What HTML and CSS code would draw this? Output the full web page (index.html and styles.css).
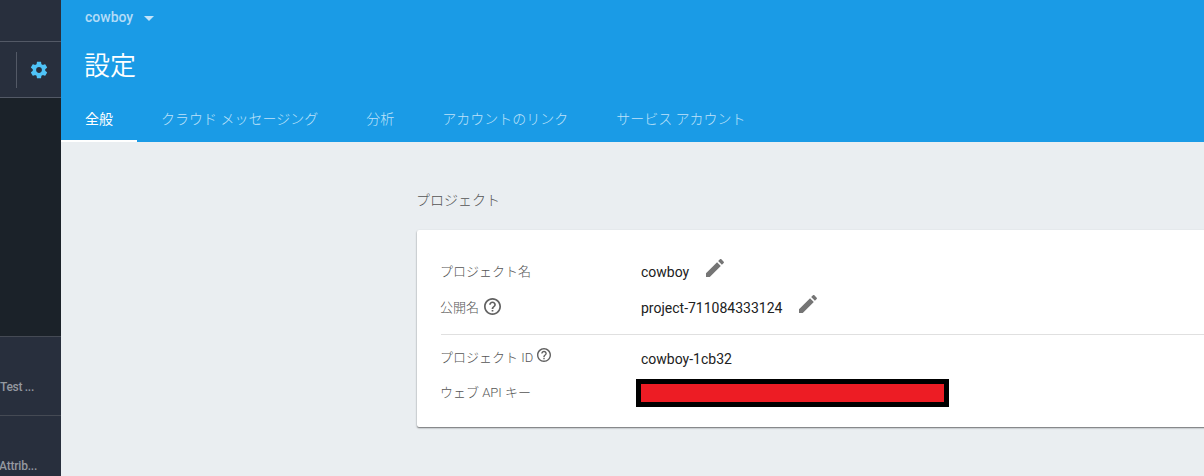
FILE: index.html
```html
<!DOCTYPE html>
<html lang="ja">
<head>
<meta charset="utf-8">
<title>設定</title>
<link rel="stylesheet" href="styles.css">
</head>
<body>
<div class="app">
  <aside class="sidebar">
    <div class="brand"></div>
    <div class="overview">
      <span class="divider"></span>
      <svg class="gear" viewBox="0 0 24 24"><path d="M19.43 12.98c.04-.32.07-.64.07-.98s-.03-.66-.07-.98l2.11-1.65c.19-.15.24-.42.12-.64l-2-3.46c-.12-.22-.39-.3-.61-.22l-2.49 1c-.52-.4-1.08-.73-1.69-.98l-.38-2.65C14.46 2.18 14.25 2 14 2h-4c-.25 0-.46.18-.49.42l-.38 2.65c-.61.25-1.17.59-1.69.98l-2.49-1c-.23-.09-.49 0-.61.22l-2 3.46c-.13.22-.07.49.12.64l2.11 1.65c-.04.32-.07.65-.07.98s.03.66.07.98l-2.11 1.65c-.19.15-.24.42-.12.64l2 3.46c.12.22.39.3.61.22l2.49-1c.52.4 1.08.73 1.69.98l.38 2.65c.03.24.24.42.49.42h4c.25 0 .46-.18.49-.42l.38-2.65c.61-.25 1.17-.59 1.69-.98l2.49 1c.23.09.49 0 .61-.22l2-3.46c.12-.22.07-.49-.12-.64l-2.11-1.65zM12 15.5c-1.93 0-3.5-1.57-3.5-3.5s1.570-3.5 3.500-3.500 3.500 1.570 3.500 3.500-1.570 3.500-3.500 3.500z"/></svg>
    </div>
    <nav class="menu"></nav>
    <div class="side-item side-test">Test ...</div>
    <div class="side-item side-attrib">Attrib...</div>
  </aside>
  <main class="main">
    <header class="header">
      <div class="project-picker">cowboy<span class="caret"></span></div>
      <h1 class="title">設定</h1>
      <nav class="tabs">
        <a class="tab active">全般</a>
        <a class="tab">クラウド メッセージング</a>
        <a class="tab">分析</a>
        <a class="tab">アカウントのリンク</a>
        <a class="tab">サービス アカウント</a>
      </nav>
    </header>
    <section class="content">
      <h2 class="section-title">プロジェクト</h2>
      <div class="card">
        <div class="row name-row">
          <div class="label">プロジェクト名</div>
          <div class="value"><span class="value-text">cowboy</span><svg class="pencil" viewBox="0 0 24 24"><path d="M3 17.250V21h3.750L17.810 9.940l-3.750-3.750L3 17.250zM20.710 7.040c.39-.39.39-1.020 0-1.410l-2.340-2.340c-.39-.39-1.020-.39-1.410 0l-1.830 1.830 3.750 3.750 1.830-1.830z"/></svg></div>
        </div>
        <div class="row public-row">
          <div class="label">公開名<svg class="help" viewBox="2 2 20 20"><path d="M11 18h2v-2h-2v2zm1-16C6.480 2 2 6.480 2 12s4.480 10 10 10 10-4.480 10-10S17.520 2 12 2zm0 18c-4.410 0-8-3.590-8-8s3.590-8 8-8 8 3.590 8 8-3.590 8-8 8zm0-14c-2.210 0-4 1.790-4 4h2c0-1.100.9-2 2-2s2 .9 2 2c0 2-3 1.750-3 5h2c0-2.250 3-2.500 3-5 0-2.210-1.790-4-4-4z"/></svg></div>
          <div class="value"><span class="value-text">project-711084333124</span><svg class="pencil" viewBox="0 0 24 24"><path d="M3 17.250V21h3.750L17.810 9.940l-3.750-3.750L3 17.250zM20.710 7.040c.39-.39.39-1.020 0-1.410l-2.340-2.340c-.39-.39-1.020-.39-1.410 0l-1.830 1.830 3.750 3.750 1.830-1.830z"/></svg></div>
        </div>
        <div class="row id-row">
          <div class="label">プロジェクト ID<svg class="help small" viewBox="2 2 20 20"><path d="M11 18h2v-2h-2v2zm1-16C6.480 2 2 6.480 2 12s4.480 10 10 10 10-4.480 10-10S17.520 2 12 2zm0 18c-4.410 0-8-3.590-8-8s3.590-8 8-8 8 3.590 8 8-3.590 8-8 8zm0-14c-2.210 0-4 1.790-4 4h2c0-1.100.9-2 2-2s2 .9 2 2c0 2-3 1.750-3 5h2c0-2.250 3-2.500 3-5 0-2.210-1.790-4-4-4z"/></svg></div>
          <div class="value">cowboy-1cb32</div>
        </div>
        <div class="row key-row">
          <div class="label">ウェブ API キー</div>
          <div class="redacted"></div>
        </div>
      </div>
    </section>
  </main>
</div>
</body>
</html>
```
FILE: styles.css
```css
* { box-sizing: border-box; }
body {
  margin: 0;
  font-family: Roboto, "Noto Sans CJK JP", sans-serif;
  overflow: hidden;
}
.app { display: flex; width: 1204px; height: 476px; overflow: hidden; background: #eaeef1; }
.sidebar { width: 61px; flex: none; display: flex; flex-direction: column; background: #282f3d; overflow: hidden; }
.brand { height: 42px; flex: none; border-bottom: 1px solid #535966; }
.overview { height: 56px; flex: none; display: flex; align-items: center; padding-left: 16px; border-bottom: 1px solid #535966; }
.divider { width: 1px; height: 36px; background: #535966; }
.gear { width: 20px; height: 20px; margin-left: 12px; fill: #4fc3f7; }
.menu { height: 238px; flex: none; background: #1b2229; }
.side-item { height: 79px; flex: none; border-top: 1px solid #454a54; color: #9498a0; font-size: 12px; font-weight: 500; line-height: 16px; padding-top: 42px; white-space: nowrap; }
.side-test { letter-spacing: -0.3px; }
.side-attrib { text-indent: -1px; letter-spacing: -0.2px; }
.main { flex: 1; min-width: 0; display: flex; flex-direction: column; }
.header { height: 142px; flex: none; display: flex; flex-direction: column; background: #1a9be6; color: #fff; }
.project-picker { height: 34px; padding-left: 24px; display: flex; align-items: center; font-size: 14px; font-weight: 500; color: #b3dcf7; }
.caret { margin: 3px 0 0 11px; border: 5px solid transparent; border-top-color: #c3e3f9; border-bottom: 0; }
.title { margin: 0; height: 62px; padding-left: 23px; font-size: 26px; font-weight: 350; line-height: 64px; }
.tabs { display: flex; height: 46px; }
.tab { padding: 0 24px; font-size: 14px; line-height: 46px; color: #bfe2f9; white-space: nowrap; font-weight: 300; }
.tab.active { color: #fff; font-weight: 400; border-bottom: 2px solid #fff; }
.content { padding: 47px 0 0 355px; }
.section-title { margin: 0; height: 41px; font-size: 14px; font-weight: 300; line-height: 22px; color: #555; }
.card { height: 197px; padding: 23px 0 0 24px; margin-right: -8px; background: #fff; border-radius: 2px; box-shadow: 0 1px 2px rgba(0,0,0,.4), 0 1px 1px rgba(0,0,0,.2); margin-left: 1px; }
.row { display: flex; height: 36px; align-items: center; }
.label { width: 200px; margin-left: -1px; margin-right: 1px; padding-bottom: 2px; display: flex; align-items: center; font-size: 13px; font-weight: 300; color: #555; white-space: nowrap; }
.value { display: flex; align-items: center; font-size: 14px; color: #212121; white-space: nowrap; }
.value-text { padding-top: 2px; }
.pencil { width: 24px; height: 24px; fill: #757575; margin: -6px 0 0 14px; }
.help { width: 17px; height: 17px; margin-left: 5px; fill: #616161; }
.help.small { width: 14px; height: 14px; margin: -2px 0 0 4px; }
.id-row { height: 43px; margin-top: 9px; padding-top: 6px; border-top: 1px solid #e0e0e0; }
.id-row .label { padding-bottom: 6px; }
.key-row { height: 31px; }
.redacted { width: 313px; height: 28px; margin-left: -5px; background: #ed1c24; border: 5px solid #000; }
```
